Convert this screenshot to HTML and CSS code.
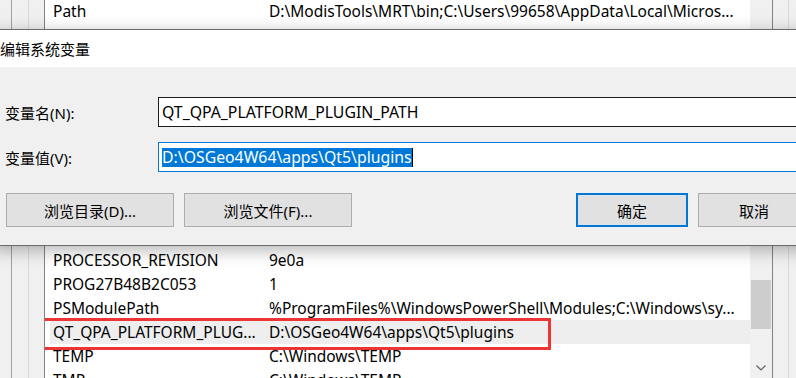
FILE: index.html
```html
<!DOCTYPE html>
<html lang="zh-CN">
<head>
    <meta charset="UTF-8">
    <meta name="viewport" content="width=device-width, initial-scale=1.0">
    <title>编辑系统变量</title>
    <link rel="stylesheet" href="styles.css">
</head>
<body>
    <div class="frame">
        <div class="group">
            <div class="inner">
                <div class="var-list">
                    <div class="rows">
                        <div class="rows-upper">
                            <div class="row"><span class="col-name">Path</span><span class="col-value">D:\ModisTools\MRT\bin;C:\Users\99658\AppData\Local\Micros...</span></div>
                            <div class="row"><span class="col-name">PATHEXT</span><span class="col-value">.COM;.EXE;.BAT;.CMD;.VBS;.VBE;.JS;.JSE;.WSF;.WSH;.MSC</span></div>
                        </div>
                        <!-- 中间的行被对话框挡住 -->
                        <div class="rows-lower">
                            <div class="row"><span class="col-name">PROCESSOR_REVISION</span><span class="col-value">9e0a</span></div>
                            <div class="row"><span class="col-name">PROG27B48B2C053</span><span class="col-value">1</span></div>
                            <div class="row"><span class="col-name">PSModulePath</span><span class="col-value">%ProgramFiles%\WindowsPowerShell\Modules;C:\Windows\sy...</span></div>
                            <div class="row selected">
                                <span class="col-name">QT_QPA_PLATFORM_PLUG...</span><span class="col-value">D:\OSGeo4W64\apps\Qt5\plugins</span>
                                <span class="mark"></span>
                            </div>
                            <div class="row"><span class="col-name">TEMP</span><span class="col-value">C:\Windows\TEMP</span></div>
                            <div class="row"><span class="col-name">TMP</span><span class="col-value">C:\Windows\TEMP</span></div>
                        </div>
                    </div>
                    <div class="scrollbar">
                        <div class="thumb"></div>
                        <div class="arrow">
                            <svg width="10" height="6" viewBox="0 0 10 6"><polyline points="0.5,0.5 5,5 9.5,0.5" fill="none" stroke="#606060" stroke-width="1.2"/></svg>
                        </div>
                    </div>
                </div>
            </div>
        </div>
    </div>

    <div class="dialog">
        <div class="dialog-title">编辑系统变量</div>
        <div class="dialog-body">
            <div class="field">
                <label class="field-label">变量名(N):</label>
                <div class="text-box">QT_QPA_PLATFORM_PLUGIN_PATH</div>
            </div>
            <div class="field">
                <label class="field-label">变量值(V):</label>
                <div class="text-box focused"><span class="selection">D:\OSGeo4W64\apps\Qt5\plugins</span><span class="caret"></span></div>
            </div>
            <div class="buttons">
                <button type="button" class="btn">浏览目录(D)...</button>
                <button type="button" class="btn">浏览文件(F)...</button>
                <button type="button" class="btn btn-ok">确定</button>
                <button type="button" class="btn btn-cancel">取消</button>
            </div>
        </div>
    </div>
</body>
</html>
```

FILE: styles.css
```css
:root {
    --window-bg: #f0f0f0;
    --accent: #0078d7;
    --list-border: #828282;
    --button-bg: #e1e1e1;
    --button-border: #adadad;
    --mark-red: #ee3535;
}

* {
    box-sizing: border-box;
}

body {
    margin: 0;
    width: 796px;
    height: 378px;
    overflow: hidden;
    position: relative;
    background-color: var(--window-bg);
    font-family: "Noto Sans", "Noto Sans CJK SC", sans-serif;
    font-size: 15.5px;
    color: #000;
}

/* 背后的环境变量窗口 */
.frame {
    width: 806px;
    height: 381px;
    margin-top: -1px;
    padding-left: 11px;
    display: flex;
}

.group {
    flex: 1;
    display: flex;
    padding: 0 16px;
    border-left: 1px solid #a0a0a0;
    border-right: 1px solid #a0a0a0;
}

.inner {
    flex: 1;
    display: flex;
    padding: 0 15px;
    border-left: 1px solid #dadada;
    border-right: 1px solid #dadada;
}

.var-list {
    flex: 1;
    display: flex;
    background-color: white;
    border-left: 1px solid var(--list-border);
    border-right: 1px solid var(--list-border);
}

.rows {
    flex: 1;
    overflow: hidden;
}

.rows-lower {
    margin-top: 201px;
}

.row {
    position: relative;
    display: flex;
    height: 24px;
    line-height: 24px;
    margin-left: 5px;
    padding-left: 3px;
    white-space: nowrap;
}

.row.selected {
    background-color: #eeeeee;
}

.col-name {
    width: 216px;
    flex-shrink: 0;
}

.mark {
    position: absolute;
    left: -11px;
    top: -2px;
    width: 512px;
    height: 32px;
    border: 3px solid var(--mark-red);
}

.scrollbar {
    width: 22px;
    display: flex;
    flex-direction: column;
    background-color: var(--window-bg);
}

.thumb {
    height: 49px;
    margin: 281px 1px 0;
    background-color: #cdcdcd;
}

.arrow {
    height: 24px;
    margin-top: auto;
    display: flex;
    align-items: center;
    justify-content: center;
}

.arrow svg {
    display: block;
}

/* 编辑系统变量 对话框 */
.dialog {
    position: absolute;
    top: 29px;
    left: -8px;
    width: 830px;
    background-color: var(--window-bg);
    border: 1px solid #6b6b6b;
    box-shadow: 0 4px 16px rgba(0,0,0,0.3);
}

.dialog-title {
    height: 37px;
    padding-left: 7px;
    display: flex;
    align-items: center;
    background-color: white;
    font-size: 15px;
}

.dialog-body {
    padding: 30px 11px 18px 12px;
}

.field {
    display: grid;
    grid-template-columns: 153px 1fr;
    align-items: center;
}

.field + .field {
    margin-top: 15px;
}

.field-label {
    font-size: 15px;
}

.text-box {
    height: 30px;
    padding-left: 3px;
    display: flex;
    align-items: center;
    white-space: nowrap;
    font-size: 15.8px;
    background-color: white;
    border: 1px solid #1e1e1e;
}

.text-box.focused {
    border-color: var(--accent);
}

.selection {
    line-height: 19px;
    background-color: var(--accent);
    color: white;
}

.caret {
    width: 1px;
    height: 19px;
    background-color: #000;
}

.buttons {
    display: flex;
    gap: 10px;
    margin-top: 21px;
    padding-left: 1px;
}

.btn {
    width: 168px;
    height: 34px;
    padding: 0;
    font-family: inherit;
    font-size: 15px;
    color: #000;
    background-color: var(--button-bg);
    border: 1px solid var(--button-border);
}

.btn-ok {
    width: 112px;
    margin-left: auto;
    border: 2px solid var(--accent);
}

.btn-cancel {
    width: 112px;
}
```
